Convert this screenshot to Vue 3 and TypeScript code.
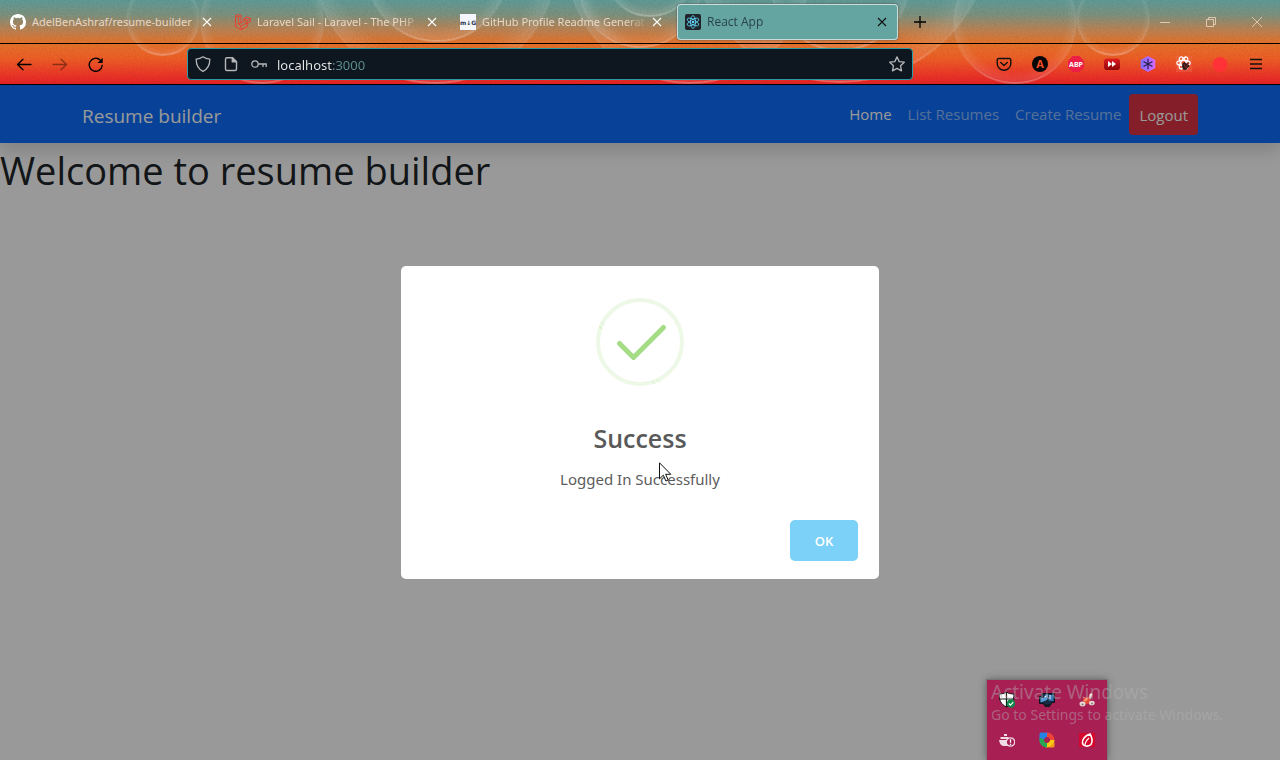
<script setup lang="ts">
import { ref } from 'vue'

interface Tab {
  title: string
  icon: 'github' | 'laravel' | 'readme' | 'react'
}

interface NavItem {
  label: string
  active: boolean
}

interface Ring {
  x: number
  y: number
  r: number
}

const tabs: Tab[] = [
  { title: 'AdelBenAshraf/resume-builder', icon: 'github' },
  { title: 'Laravel Sail - Laravel - The PHP', icon: 'laravel' },
  { title: 'GitHub Profile Readme Generat', icon: 'readme' },
  { title: 'React App', icon: 'react' },
]
const activeTab = ref(3)

const navItems: NavItem[] = [
  { label: 'Home', active: true },
  { label: 'List Resumes', active: false },
  { label: 'Create Resume', active: false },
]

const rings: Ring[] = [
  { x: 163, y: 19, r: 36 },
  { x: 262, y: 22, r: 61 },
  { x: 437, y: -30, r: 71 },
  { x: 435, y: -38, r: 121 },
  { x: 650, y: -30, r: 46 },
  { x: 640, y: -14, r: 61 },
  { x: 690, y: -40, r: 123 },
  { x: 840, y: -20, r: 70 },
  { x: 840, y: -70, r: 152 },
  { x: 1015, y: 22, r: 61 },
  { x: 1113, y: 19, r: 36 },
]

const petals = [0, 60, 120]
const url = ref('localhost:3000')
</script>

<template>
  <div class="window">
    <header class="chrome">
      <svg class="theme" aria-hidden="true">
        <defs>
          <linearGradient id="sky" x1="0" y1="0" x2="0" y2="1">
            <stop offset="0" stop-color="#5f9b97" />
            <stop offset="0.17" stop-color="#7b9280" />
            <stop offset="0.36" stop-color="#bc8252" />
            <stop offset="0.52" stop-color="#e5722a" />
            <stop offset="0.7" stop-color="#ee5e26" />
            <stop offset="0.88" stop-color="#ec3828" />
            <stop offset="1" stop-color="#e82427" />
          </linearGradient>
          <radialGradient id="bubble" cy="0.47" fy="0.47">
            <stop offset="0.85" stop-color="#fff" stop-opacity="0" />
            <stop offset="1" stop-color="#fff" stop-opacity="0.1" />
          </radialGradient>
          <linearGradient id="rim" x1="0" y1="0" x2="0" y2="1">
            <stop offset="0.5" stop-color="#fff" stop-opacity="0.04" />
            <stop offset="0.85" stop-color="#fff" stop-opacity="0.08" />
            <stop offset="1" stop-color="#fff" stop-opacity="0.26" />
          </linearGradient>
          <filter id="grain" x="0" y="0" width="100%" height="100%" color-interpolation-filters="sRGB">
            <feTurbulence type="fractalNoise" baseFrequency="0.6" numOctaves="2" seed="4" />
            <feColorMatrix values="0 0 0 0 0.1  0 0 0 0 0.05  0 0 0 0 0.02  0.3 0 0 0 -0.1" />
          </filter>
        </defs>
        <rect width="100%" height="100%" fill="url(#sky)" />
        <g v-for="(ring, i) in rings" :key="i">
          <circle :cx="ring.x" :cy="ring.y" :r="ring.r" fill="url(#bubble)" />
          <circle :cx="ring.x" :cy="ring.y" :r="ring.r" fill="none" stroke="url(#rim)" stroke-width="2" />
        </g>
        <rect width="100%" height="100%" filter="url(#grain)" opacity="0.5" />
      </svg>

      <div class="tab-strip">
        <div
          v-for="(tab, i) in tabs"
          :key="tab.title"
          class="tab"
          :class="{ selected: i === activeTab }"
        >
          <button class="tab-main" type="button" @click="activeTab = i">
            <svg v-if="tab.icon === 'github'" width="16" height="16" viewBox="0 0 16 16" fill="#fff">
              <path d="M8 0C3.58 0 0 3.58 0 8c0 3.54 2.29 6.53 5.47 7.59.4.07.55-.17.55-.38 0-.19-.01-.82-.01-1.49-2.01.37-2.53-.49-2.69-.94-.09-.23-.48-.94-.82-1.13-.28-.15-.68-.52-.01-.53.63-.01 1.08.58 1.23.82.72 1.21 1.87.87 2.33.66.07-.52.28-.87.51-1.07-1.78-.2-3.64-.89-3.64-3.95 0-.87.31-1.59.82-2.15-.08-.2-.36-1.02.08-2.12 0 0 .67-.21 2.2.82a7.6 7.6 0 0 1 4 0c1.53-1.04 2.2-.82 2.2-.82.44 1.1.16 1.92.08 2.12.51.56.82 1.27.82 2.15 0 3.07-1.87 3.75-3.65 3.95.29.25.54.73.54 1.48 0 1.07-.01 1.93-.01 2.2 0 .21.15.46.55.38A8.01 8.01 0 0 0 16 8c0-4.42-3.58-8-8-8z" />
            </svg>
            <svg v-else-if="tab.icon === 'laravel'" width="16" height="16" viewBox="0 0 16 16" fill="none" stroke="#e8402f" stroke-width="1" stroke-linejoin="round">
              <path d="M.6 1.7 3.3.4 6 1.7v7.1l2.8-1.6V4.5l3.2-1.6 3.3 1.6v3.3L12.2 9.4v3.1L6 15.7.6 12.6zM.6 1.7 3.3 3v7.2L6 8.8M3.3 3 6 1.7M3.3 10.2 6.2 12l6-3.2M6.2 12v3.7M8.8 4.5 12 6.2l3.3-1.7M12 6.2v3.2M8.8 7.2l3.4 2.2" />
            </svg>
            <svg v-else-if="tab.icon === 'readme'" width="16" height="16" viewBox="0 0 16 16">
              <rect width="16" height="16" fill="#f4f6fb" />
              <text x="8" y="11" text-anchor="middle" class="readme-mark">m↓G</text>
            </svg>
            <svg v-else width="16" height="16" viewBox="0 0 16 16">
              <rect width="16" height="16" rx="2" fill="#20232a" />
              <g fill="none" stroke="#61dafb" stroke-width="0.8">
                <ellipse v-for="a in petals" :key="a" cx="8" cy="8" rx="2.5" ry="6.4" :transform="`rotate(${a} 8 8)`" />
              </g>
              <circle cx="8" cy="8" r="1.3" fill="#61dafb" />
            </svg>
            <span class="tab-title">{{ tab.title }}</span>
          </button>
          <button class="tab-close" type="button" aria-label="Close tab">
            <svg width="10" height="10" viewBox="0 0 10 10" fill="none" stroke="currentColor" stroke-width="1.1">
              <path d="M1 1l8 8M9 1 1 9" />
            </svg>
          </button>
        </div>
        <button class="new-tab" type="button" aria-label="New tab">
          <svg width="12" height="12" viewBox="0 0 12 12" stroke="#000" stroke-width="1.3"><path d="M6 0v12M0 6h12" /></svg>
        </button>
        <div class="window-buttons">
          <button type="button" aria-label="Minimize">
            <svg width="10" height="10" viewBox="0 0 10 10" stroke="#e0c8b0" shape-rendering="crispEdges"><path d="M0 5h10" /></svg>
          </button>
          <button type="button" aria-label="Restore">
            <svg width="10" height="10" viewBox="0 0 10 10" fill="none" stroke="#e0c8b0"><path d="M.5 2.5h7v7h-7zM2.5 2.5v-2h7v7h-2" /></svg>
          </button>
          <button type="button" aria-label="Close">
            <svg width="10" height="10" viewBox="0 0 10 10" stroke="#e8cdb4" stroke-width="0.9"><path d="M0 0l10 10M10 0 0 10" /></svg>
          </button>
        </div>
      </div>

      <div class="toolbar">
        <div class="history">
          <button type="button" aria-label="Back">
            <svg width="16" height="16" viewBox="0 0 16 16" fill="none" stroke="#000" stroke-width="1.3" stroke-linecap="round" stroke-linejoin="round"><path d="M15 8.500H1.500M7 3.200 1.500 8.500 7 13.800" /></svg>
          </button>
          <button type="button" aria-label="Forward" class="faded">
            <svg width="16" height="16" viewBox="0 0 16 16" fill="none" stroke="#000" stroke-width="1.3" stroke-linecap="round" stroke-linejoin="round"><path d="M1 8.500h13.500M9 3.200 14.500 8.500 9 13.800" /></svg>
          </button>
          <button type="button" aria-label="Reload">
            <svg width="16" height="16" viewBox="0 0 16 16" fill="none" stroke="#000" stroke-width="1.4" stroke-linecap="round"><path d="M14.200 9.500A6.500 6.500 0 1 1 12.600 4.400" /><path d="M14.700 1.700V7H9.400z" fill="#000" stroke="none" /></svg>
          </button>
        </div>

        <div class="address">
          <svg width="16" height="16" viewBox="0 0 16 16" fill="none" stroke="#b4b6b9" stroke-width="1.3" stroke-linejoin="round"><path d="M8 .8C10 2.2 12.3 2.9 14.8 3.1 14.9 9 13 13 8 15.3 3 13 1.1 9 1.2 3.1 3.7 2.9 6 2.2 8 .8z" /></svg>
          <svg width="16" height="16" viewBox="0 0 16 16" fill="none" stroke="#b4b6b9" stroke-width="1.4" stroke-linejoin="round"><path d="M4 1.7h5.5l4 4V13a1.500 1.500 0 0 1-1.500 1.500H4A1.500 1.500 0 0 1 2.500 13V3.200A1.500 1.500 0 0 1 4 1.700z" /><path d="M9.3 1.7v4.200h4.200z" fill="#b4b6b9" /></svg>
          <svg width="16" height="16" viewBox="0 0 16 16" fill="none" stroke="#b4b6b9" stroke-width="1.3"><circle cx="4" cy="8" r="3.2" /><path d="M7.200 8h8.600M12 8v3M15.200 8v3" /></svg>
          <input v-model="url" class="url" type="text" aria-label="Address" />
          <button type="button" aria-label="Bookmark this page">
            <svg width="16" height="16" viewBox="0 0 16 16" fill="none" stroke="#b4b6b9" stroke-width="1.3" stroke-linejoin="round"><path d="M8 .9l2.200 4.700 5.100.6-3.800 3.500 1 5.200L8 12.400l-4.500 2.500 1-5.200L.7 6.200l5.100-.6z" /></svg>
          </button>
        </div>

        <div class="extensions">
          <button type="button" aria-label="Save to Pocket">
            <svg width="16" height="16" viewBox="0 0 16 16" fill="none" stroke="#111" stroke-width="1.4" stroke-linecap="round" stroke-linejoin="round"><path d="M2.500 2.500h11a1.300 1.300 0 0 1 1.300 1.300v3.700a6.800 6.800 0 0 1-13.600 0V3.800a1.300 1.300 0 0 1 1.300-1.300z" /><path d="M4.700 6.500 8 9.500l3.300-3" /></svg>
          </button>
          <button type="button" aria-label="Account">
            <svg width="16" height="16" viewBox="0 0 16 16"><circle cx="8" cy="8" r="8" fill="#050505" /><text x="8" y="12" text-anchor="middle" class="account-mark">A</text></svg>
          </button>
          <button type="button" aria-label="Adblock Plus">
            <svg width="16" height="16" viewBox="0 0 16 16"><path d="M4.700 0h6.600L16 4.700v6.600L11.300 16H4.700L0 11.300V4.700z" fill="#ed1e45" /><text x="8" y="11" text-anchor="middle" class="abp-mark">ABP</text></svg>
          </button>
          <button type="button" aria-label="Video speed">
            <svg width="16" height="16" viewBox="0 0 16 16"><defs><linearGradient id="speed" x1="0" y1="0" x2="0" y2="1"><stop stop-color="#dd1c22" /><stop offset="1" stop-color="#8f0509" /></linearGradient></defs><rect x="0" y="2.500" width="16" height="11.500" rx="3" fill="url(#speed)" /><path d="M4 5l4 3-4 3zM8 5l4 3-4 3z" fill="#fff" /></svg>
          </button>
          <button type="button" aria-label="Snowflake">
            <svg width="16" height="16" viewBox="0 0 16 16"><defs><linearGradient id="hex"><stop stop-color="#7f6dff" /><stop offset="1" stop-color="#d968ff" /></linearGradient></defs><path d="M8 0l7.300 4v8L8 16 .7 12V4z" fill="url(#hex)" /><path d="M8 2.800v10.400M3.500 5.400l9 5.200M12.500 5.400l-9 5.200" stroke="#242052" stroke-width="1.200" /></svg>
          </button>
          <button type="button" aria-label="React tools">
            <svg width="16" height="16" viewBox="0 0 16 16"><rect width="16" height="16" fill="#f06a55" opacity="0.4" /><g fill="none" stroke="#fff" stroke-width="1.200"><ellipse v-for="a in petals" :key="a" cx="7.500" cy="7" rx="6.700" ry="2.700" :transform="`rotate(${a} 7.5 7)`" /></g><path d="M6.500 7.500l2-1.500 1.500 1.500 3-1.500-1 2 1.500 2-3.500 4-3-.5-1-3z" fill="#2c1714" /><path d="M8 8l1.500 4M11.500 7l-1 5" stroke="#b03a2a" stroke-width="0.600" /></svg>
          </button>
          <button type="button" aria-label="Recorder">
            <svg width="16" height="16" viewBox="0 0 16 16"><circle cx="8" cy="8.500" r="7.500" fill="#ff3237" /></svg>
          </button>
          <button type="button" aria-label="Menu">
            <svg width="16" height="16" viewBox="0 0 16 16" stroke="#111" stroke-width="1.300"><path d="M2 3.500h12M2 8h12M2 12.500h12" /></svg>
          </button>
        </div>
      </div>
    </header>

    <main class="page">
      <nav class="navbar">
        <div class="container">
          <a class="brand" href="#">Resume builder</a>
          <div class="links">
            <a v-for="item in navItems" :key="item.label" href="#" class="link" :class="{ active: item.active }">{{ item.label }}</a>
            <button class="logout" type="button">Logout</button>
          </div>
        </div>
      </nav>
      <h1>Welcome to resume builder</h1>

      <div class="backdrop">
        <section class="modal" role="dialog" aria-modal="true" aria-labelledby="modal-title">
          <svg class="success" width="88" height="88" viewBox="0 0 88 88" fill="none">
            <circle cx="44" cy="44" r="42" stroke="#edf8e7" stroke-width="4" />
            <path d="M5 24l2.500 2.500M3 28l3 3M56 83l3 3M61 81.500l3 3" stroke="#bfe5aa" stroke-width="0.600" />
            <path d="M23.500 45.500 37.500 59.500 67.500 29.500" stroke="#a5dc86" stroke-width="5" stroke-linecap="round" stroke-linejoin="round" />
          </svg>
          <h2 id="modal-title">Success</h2>
          <p>Logged In Successfully</p>
          <div class="modal-footer">
            <button class="ok" type="button">OK</button>
          </div>
        </section>
      </div>
    </main>

    <aside class="tray" aria-label="Hidden icons">
      <svg width="16" height="16" viewBox="0 0 16 16"><path d="M7.500 0C9.500 1.500 12 2 15 2c0 6-2 10.500-7.500 13C2 12.500 0 8 0 2c3 0 5.500-.5 7.500-2z" fill="#fff" stroke="#161616" /><path d="M7.500 0v15M0 7h15" stroke="#161616" stroke-width="1.200" /><circle cx="12" cy="11.500" r="4.300" fill="#10874a" /><path d="M9.800 11.500l1.700 1.700 2.700-3" fill="none" stroke="#fff" stroke-width="1.200" /></svg>
      <svg width="16" height="16" viewBox="0 0 16 16"><path d="M3 1.500h12.500v9H13l-1 2H6l-1-1H.5v-7H3z" fill="#162c45" stroke="#0c1420" /><path d="M1.500 6h3l2-3.500h3L8 8l-5 2H1.500z" fill="#5d9bd6" /><path d="M10 3h4.500v6l-5-.5z" fill="#3f79b8" /><path d="M11 3v4M5.500 5l2-1" stroke="#e5f2ff" /><path d="M4 12h8l-1 3H6z" fill="#141b24" /></svg>
      <svg width="16" height="16" viewBox="0 0 16 16"><path d="M8.500 8 11 2l2-1v3l-2.500 5zM3.500 4.500 7 6 6 8z" fill="#d6c8c5" /><circle cx="12" cy="3" r="1.400" fill="#f4e9e4" /><circle cx="7.500" cy="8.500" r="3.600" fill="#e24d36" /><path d="M4.500 8.500l3-3 2 1-3 3z" fill="#ff9578" /><ellipse cx="3.500" cy="12" rx="3" ry="2.400" fill="#e6d9d5" /><ellipse cx="12.800" cy="11" rx="2.800" ry="2.300" fill="#e6d9d5" /><circle cx="3.500" cy="12.500" r="1" fill="#8d7576" /><circle cx="13" cy="11.500" r="1" fill="#8d7576" /></svg>
      <svg width="16" height="16" viewBox="0 0 16 16"><path d="M0 8h11.500L11 12l-2 2H4C2 13.500.5 11.500 0 8zM1.500 5h8v2h-8zM5 2h3v2H5z" fill="#f1dbe3" /><circle cx="11.500" cy="10" r="4.200" fill="#a81f54" stroke="#f1dbe3" stroke-width="1.200" /><path d="M11.500 7.300v3.500M11.500 11.700v1.200" stroke="#fff" stroke-width="1.300" /></svg>
      <svg width="16" height="16" viewBox="0 0 16 16" fill="none" stroke-width="4.500"><path d="M2.700 8A5.300 5.300 0 0 1 9 2.800" stroke="#2683e6" /><path d="M8 2.700A5.300 5.300 0 0 1 13.300 8" stroke="#ef4535" /><path d="M13.300 8A5.300 5.300 0 0 1 7 13.200" stroke="#fac711" /><path d="M8 13.300A5.300 5.300 0 0 1 2.900 6.500" stroke="#27a653" /><path d="M.5 7V2Q.5.500 2 .5H6z" fill="#2683e6" stroke="none" /><path d="M10 15.500h4q1.500 0 1.500-1.500v-4z" fill="#f59b1c" stroke="none" /></svg>
      <svg width="16" height="16" viewBox="0 0 16 16"><rect y="1" width="16" height="14" fill="#d4082c" /><path d="M11 2C6 3.500 3 7.500 3.500 11c.5 3.500 6 4 8.500 1.500C14 10 13 5 11 2z" fill="none" stroke="#fff" stroke-width="1.600" /><path d="M6 13c0-3 2-5 4-7" fill="none" stroke="#fff" stroke-width="1.100" /></svg>
    </aside>

    <div class="watermark">
      <div class="watermark-title">Activate Windows</div>
      <div class="watermark-text">Go to Settings to activate Windows.</div>
    </div>

    <svg class="pointer" width="13" height="20" viewBox="0 0 13 20" aria-hidden="true">
      <path d="M.5.8v16l3.800-3.600 2.600 5.800 2.300-1-2.600-5.700h5.200z" fill="#fff" stroke="#111" />
    </svg>
  </div>
</template>

<style>
body {
  margin: 0;
}
</style>

<style scoped>
.window {
  position: relative;
  display: flex;
  flex-direction: column;
  min-height: 100vh;
  overflow: hidden;
  font-family: "Open Sans", "Noto Sans", sans-serif;
}

.window * {
  box-sizing: border-box;
}

svg {
  display: block;
  flex: none;
}

button {
  display: flex;
  align-items: center;
  justify-content: center;
  padding: 0;
  border: 0;
  background: none;
  font: inherit;
  color: inherit;
}

.chrome {
  position: relative;
  border-bottom: 1px solid #000;
}

.theme {
  position: absolute;
  inset: 0;
  width: 100%;
  height: 100%;
}

.tab-strip {
  position: relative;
  display: flex;
  align-items: center;
  gap: 4px;
  height: 44px;
  padding-left: 2px;
  border-bottom: 1px solid #000;
}

.tab {
  display: flex;
  align-items: center;
  flex: 0 1 221px;
  min-width: 0;
  height: 36px;
  padding: 0 8px;
  border-radius: 4px;
  color: #e9d6c4;
}

.tab.selected {
  background: #64a5a2;
  color: #2b4348;
  box-shadow: inset 0 0 0 1px #c8dcdc, 0 0 2px #444;
}

.tab-main {
  flex: 1;
  justify-content: flex-start;
  gap: 6px;
  min-width: 0;
}

.tab-title {
  flex: 1;
  overflow: hidden;
  padding-top: 1px;
  font-family: "Noto Sans", sans-serif;
  font-size: 11px;
  line-height: 20px;
  text-align: left;
  white-space: nowrap;
  mask-image: linear-gradient(to left, transparent, #000 24px);
}

.tab:first-child .tab-title {
  mask-image: none;
}

.tab.selected .tab-title {
  font-family: "Open Sans", sans-serif;
  font-size: 12px;
}

.tab-close {
  width: 16px;
  height: 16px;
  color: #fff;
}

.selected .tab-close {
  color: #111;
}

.readme-mark {
  font: bold 6px "DejaVu Sans", sans-serif;
  fill: #2a3550;
}

.new-tab {
  width: 36px;
  height: 36px;
}

.window-buttons {
  display: flex;
  margin-left: auto;
}

.window-buttons button {
  width: 46px;
  height: 30px;
}

.toolbar {
  position: relative;
  display: flex;
  align-items: center;
  height: 40px;
  padding: 0 6px;
}

.history,
.extensions {
  display: flex;
  flex: none;
}

.history button,
.extensions button {
  width: 36px;
  height: 32px;
}

.faded {
  opacity: 0.4;
}

.address {
  display: flex;
  align-items: center;
  flex: 1;
  gap: 12px;
  height: 32px;
  margin: 0 73px;
  padding: 0 7px;
  border: 1px solid #2b9ba6;
  border-radius: 4px;
  background: #0e171f;
}

.url {
  flex: 1;
  min-width: 0;
  height: 24px;
  margin-left: -2px;
  padding: 1px 0 0;
  border: 0;
  outline: 0;
  background: linear-gradient(90deg, #e8eaea 55px, #5e8f90 55px) text;
  color: transparent;
  font: 13px "Noto Sans", sans-serif;
}

.account-mark {
  font: bold 11px "Noto Sans", sans-serif;
  fill: #f04d24;
}

.abp-mark {
  font: bold 7px "Noto Sans", sans-serif;
  fill: #fff;
}

.page {
  position: relative;
  flex: 1;
  background: #fff;
}

.navbar {
  height: 58px;
  background: #0d6efd;
  box-shadow: 0 8px 16px rgba(0, 0, 0, 0.15);
}

.container {
  display: flex;
  align-items: center;
  justify-content: space-between;
  max-width: 1140px;
  height: 100%;
  margin: 0 auto;
  padding: 0 12px;
}

.brand {
  padding-top: 3px;
  color: #fff;
  font-size: 19px;
  line-height: 30px;
  text-decoration: none;
}

.links {
  display: flex;
  align-items: center;
}

.link {
  padding: 8px;
  color: rgba(255, 255, 255, 0.55);
  font-size: 15px;
  line-height: 24px;
  text-decoration: none;
}

.link.active {
  color: #fff;
}

.logout {
  height: 41px;
  padding: 1px 10px 0;
  border-radius: 4px;
  background: #dc3545;
  color: #fff;
  font-size: 15px;
}

h1 {
  margin: 0;
  color: #212529;
  font-size: 38px;
  font-weight: 400;
  line-height: 54px;
}

.backdrop {
  position: absolute;
  inset: 0;
  display: flex;
  align-items: center;
  justify-content: center;
  background: rgba(0, 0, 0, 0.4);
}

.modal {
  display: flex;
  flex-direction: column;
  align-items: center;
  width: 478px;
  max-width: 100%;
  padding: 32px 21px 18px;
  border-radius: 5px;
  background: #fff;
}

h2 {
  margin: 32px 0 0;
  color: #595959;
  font-size: 25px;
  font-weight: 600;
  line-height: 40px;
}

.modal p {
  margin: 9px 0 0;
  color: #5c5c5c;
  font-family: "Noto Sans", sans-serif;
  font-size: 15px;
  line-height: 24px;
}

.modal-footer {
  display: flex;
  justify-content: flex-end;
  width: 100%;
  margin-top: 29px;
}

.ok {
  width: 68px;
  height: 41px;
  border-radius: 5px;
  background: #7cd1f9;
  color: #fff;
  font-size: 13px;
  font-weight: 600;
}

.tray {
  position: absolute;
  right: 173px;
  bottom: 0;
  display: grid;
  grid-template-columns: repeat(3, 40px);
  grid-auto-rows: 40px;
  place-items: center;
  background: #a81f54;
  box-shadow: 0 0 0 1px #777, 0 0 8px rgba(0, 0, 0, 0.45);
}

.watermark {
  position: absolute;
  right: 53px;
  bottom: 34px;
  width: 236px;
  color: rgba(180, 180, 180, 0.46);
  font-family: "Noto Sans", sans-serif;
  white-space: nowrap;
}

.watermark-title {
  font-size: 19px;
  line-height: 24px;
}

.watermark-text {
  font-size: 14px;
  line-height: 22px;
}

.pointer {
  position: absolute;
  top: 462px;
  left: 659px;
}
</style>
